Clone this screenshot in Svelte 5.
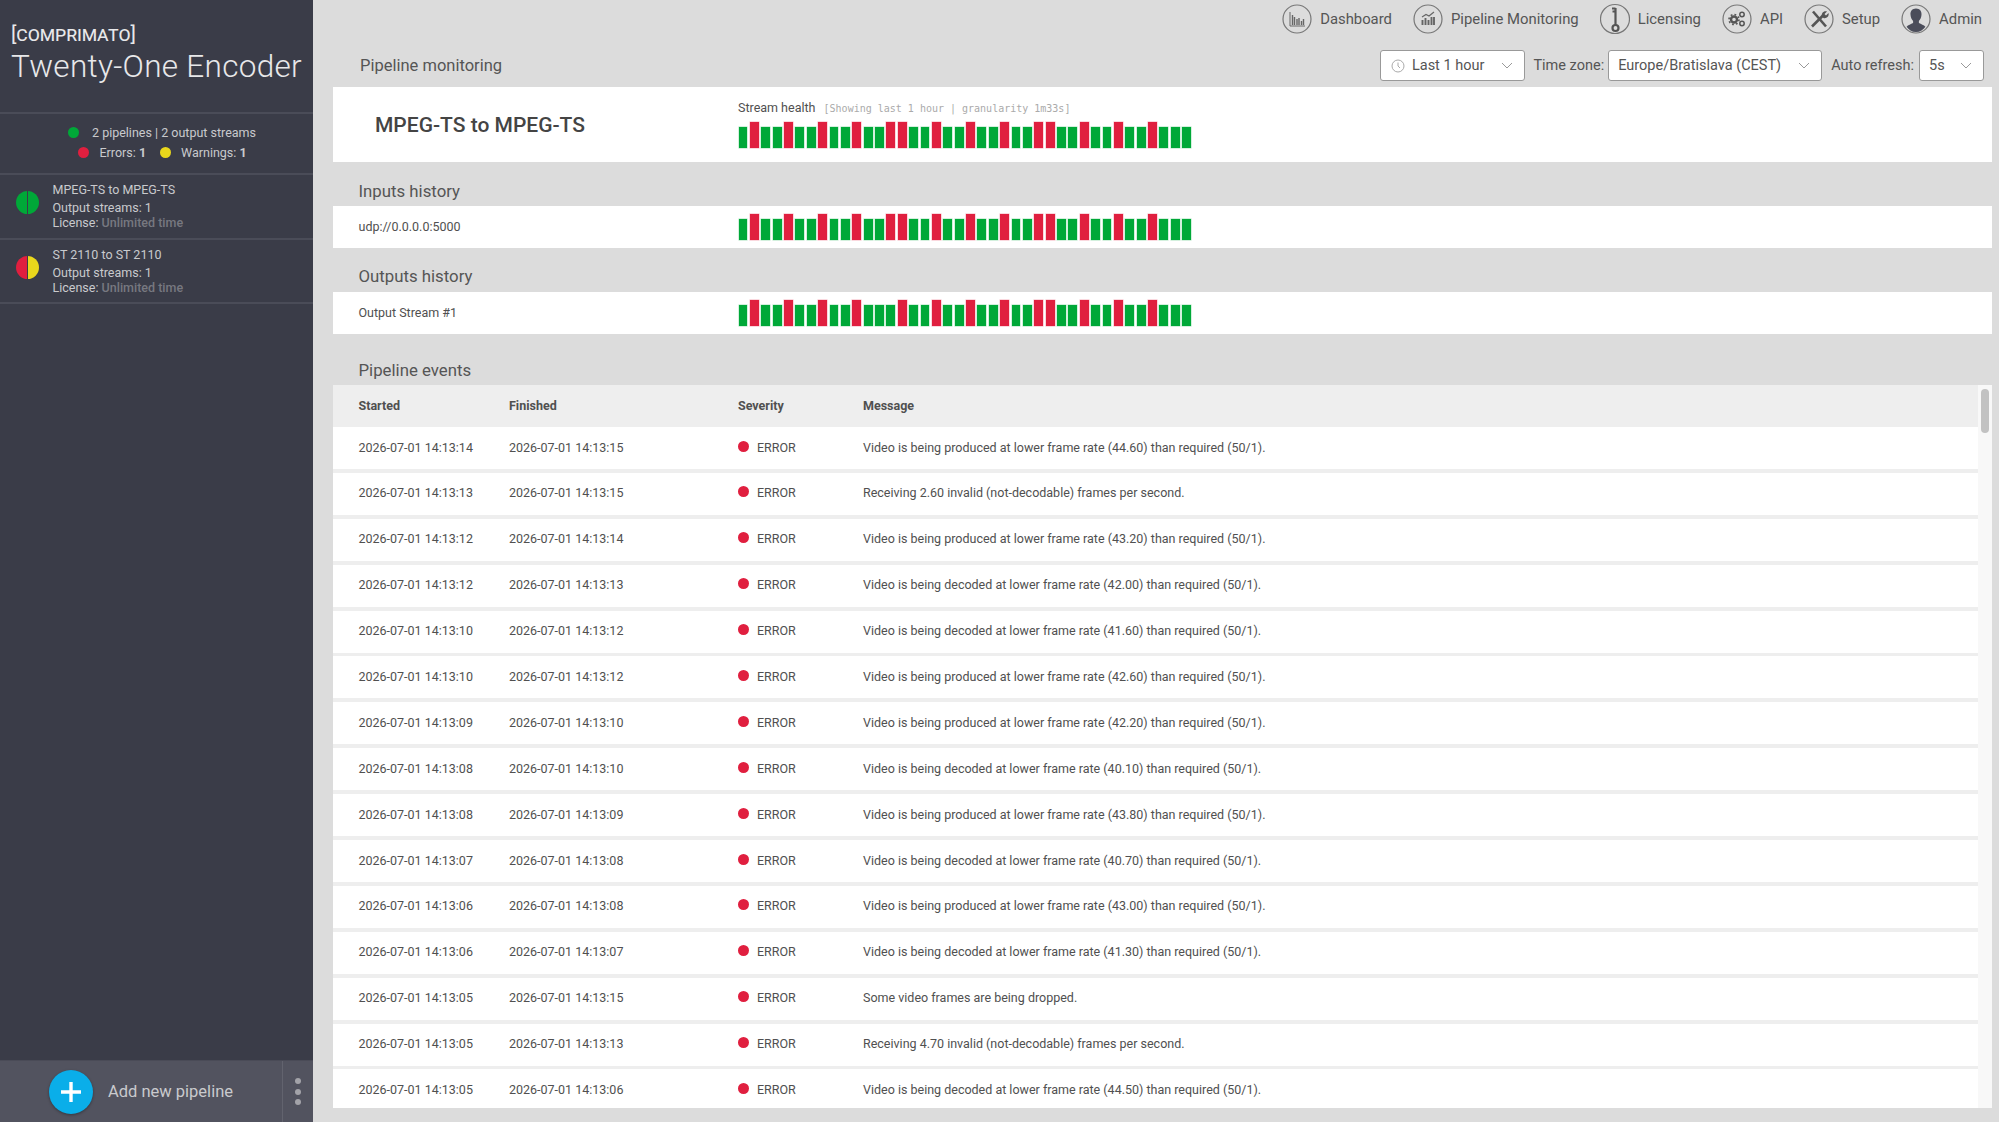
<script>
  const healthReds = [1, 4, 7, 10, 13, 14, 17, 20, 23, 26, 27, 30, 33, 36];
  const outputReds = [1, 4, 7, 10, 14, 17, 20, 23, 26, 27, 30, 33, 36];
  const bars = (reds) => Array.from({ length: 40 }, (_, i) => reds.includes(i));

  const produced = (v) => `Video is being produced at lower frame rate (${v}) than required (50/1).`;
  const decoded = (v) => `Video is being decoded at lower frame rate (${v}) than required (50/1).`;
  const invalid = (v) => `Receiving ${v} invalid (not-decodable) frames per second.`;

  const events = [
    ["14", "15", produced("44.60")],
    ["13", "15", invalid("2.60")],
    ["12", "14", produced("43.20")],
    ["12", "13", decoded("42.00")],
    ["10", "12", decoded("41.60")],
    ["10", "12", produced("42.60")],
    ["09", "10", produced("42.20")],
    ["08", "10", decoded("40.10")],
    ["08", "09", produced("43.80")],
    ["07", "08", decoded("40.70")],
    ["06", "08", produced("43.00")],
    ["06", "07", decoded("41.30")],
    ["05", "15", "Some video frames are being dropped."],
    ["05", "13", invalid("4.70")],
    ["05", "06", decoded("44.50")]
  ];
</script>

<div class="app">
  <aside class="sidebar">
    <div class="brand">
      <div class="logo">[comprimato]</div>
      <div class="product">Twenty-One Encoder</div>
    </div>
    <div class="summary">
      <div class="sum-line first"><i class="dot green"></i><span>2 pipelines | 2 output streams</span></div>
      <div class="sum-line second">
        <i class="dot red"></i><span>Errors: <b>1</b></span>
        <i class="dot yellow"></i><span>Warnings: <b>1</b></span>
      </div>
    </div>
    <div class="pipe">
      <div class="split"><i class="green"></i><i class="green"></i></div>
      <div class="pipe-text">
        <div class="pipe-name">MPEG-TS to MPEG-TS</div>
        <div class="pipe-streams">Output streams: 1</div>
        <div>License: <span class="muted">Unlimited time</span></div>
      </div>
    </div>
    <div class="pipe">
      <div class="split"><i class="red"></i><i class="yellow"></i></div>
      <div class="pipe-text">
        <div class="pipe-name">ST 2110 to ST 2110</div>
        <div class="pipe-streams">Output streams: 1</div>
        <div>License: <span class="muted">Unlimited time</span></div>
      </div>
    </div>
    <div class="footer">
      <div class="add">
        <span class="plus">
          <svg width="24" height="24" viewBox="0 0 24 24"><path d="M12 2v20M2 12h20" stroke="#fff" stroke-width="3.4" /></svg>
        </span>
        <span>Add new pipeline</span>
      </div>
      <div class="more"><i></i><i></i><i></i></div>
    </div>
  </aside>

  <main class="main">
    <nav class="nav">
      <div class="nav-item">
        <svg width="30" height="30" viewBox="0 0 30 30">
          <circle cx="15" cy="15" r="14" class="ring" />
          <path d="M8 8v14h15" class="ln" />
          <path d="M10.5 21v-10M12.5 21v-8M15 21v-6M17 21v-7M19.500 21v-4M21.500 21v-6" class="ln" stroke-width="1.4" />
        </svg>
        <span>Dashboard</span>
      </div>
      <div class="nav-item">
        <svg width="30" height="30" viewBox="0 0 30 30">
          <circle cx="15" cy="15" r="14" class="ring" />
          <path d="M9.500 21v-5M12.500 21v-7M15.500 21v-5M18.500 21v-8M21 21v-8" class="ln" stroke-width="1.900" />
          <path d="M9 13l4-2.500 3 1.500 5-4" class="ln" stroke-width="1.200" />
        </svg>
        <span>Pipeline Monitoring</span>
      </div>
      <div class="nav-item">
        <svg width="30" height="32" viewBox="0 0 30 32">
          <circle cx="15" cy="16" r="14.500" class="ring" />
          <path d="M15.500 5v17M12 5.500h3.500M12.500 8.500h3" class="ln dark" stroke-width="2.200" />
          <circle cx="15.500" cy="25" r="3" fill="none" stroke="#555" stroke-width="2.200" />
        </svg>
        <span>Licensing</span>
      </div>
      <div class="nav-item">
        <svg width="30" height="30" viewBox="0 0 30 30">
          <circle cx="15" cy="15" r="14" class="ring" />
          <circle cx="12" cy="15.500" r="3" fill="none" stroke="#555" stroke-width="2.400" />
          <circle cx="12" cy="15.500" r="5" fill="none" stroke="#555" stroke-width="1.600" stroke-dasharray="1.800 2.100" />
          <circle cx="20" cy="10.500" r="2.200" fill="none" stroke="#555" stroke-width="1.500" />
          <circle cx="20" cy="19.500" r="2.200" fill="none" stroke="#555" stroke-width="1.500" />
        </svg>
        <span>API</span>
      </div>
      <div class="nav-item">
        <svg width="30" height="30" viewBox="0 0 30 30">
          <circle cx="15" cy="15" r="14" class="ring" />
          <path d="M9 7.500l13 15" class="ln dark" stroke-width="2.600" />
          <path d="M8 22.500l11-11" class="ln dark" stroke-width="2.600" />
          <path d="M18 12.500c-1-3 1.500-6 5-5l-2.500 2.500 1.500 1.500 2.500-2.500c1 3.500-2.500 6-5 5z" fill="#555" />
        </svg>
        <span>Setup</span>
      </div>
      <div class="nav-item">
        <svg width="30" height="30" viewBox="0 0 30 30">
          <circle cx="15" cy="15" r="14" class="ring" />
          <path d="M15 4.500c-3.800 0-5.800 2.800-5.500 6.200.2 2.700 1.300 5 2.600 6.200v2c-2.200 1.200-5 2-6.500 3.800 2 3 5.200 5.300 9.400 5.300s7.400-2.300 9.400-5.300c-1.500-1.800-4.300-2.600-6.500-3.800v-2c1.300-1.200 2.400-3.500 2.600-6.200.3-3.400-1.700-6.200-5.500-6.200z" fill="#4b4d5a" />
        </svg>
        <span>Admin</span>
      </div>
    </nav>

    <div class="toolbar">
      <h2>Pipeline monitoring</h2>
      <div class="controls">
        <div class="select range">
          <svg width="14" height="14" viewBox="0 0 14 14" class="clock">
            <circle cx="7" cy="7" r="6" fill="none" stroke="#aaa" />
            <path d="M7 3.500V7l2 2" fill="none" stroke="#aaa" />
          </svg>
          <span>Last 1 hour</span>
          <svg class="chev" width="12" height="7" viewBox="0 0 12 7"><path d="M1 1l5 5 5-5" fill="none" stroke="#999" /></svg>
        </div>
        <label class="zone-label" for="zone">Time zone:</label>
        <div class="select zone" id="zone">
          <span>Europe/Bratislava (CEST)</span>
          <svg class="chev" width="12" height="7" viewBox="0 0 12 7"><path d="M1 1l5 5 5-5" fill="none" stroke="#999" /></svg>
        </div>
        <label class="refresh-label" for="refresh">Auto refresh:</label>
        <div class="select refresh" id="refresh">
          <span>5s</span>
          <svg class="chev" width="12" height="7" viewBox="0 0 12 7"><path d="M1 1l5 5 5-5" fill="none" stroke="#999" /></svg>
        </div>
      </div>
    </div>

    <section class="panel top">
      <div class="pipeline-name">MPEG-TS to MPEG-TS</div>
      <div class="health">
        <div class="health-title">Stream health <span>[Showing last 1 hour | granularity 1m33s]</span></div>
        <div class="bars">
          {#each bars(healthReds) as red}<i class:bad={red}></i>{/each}
        </div>
      </div>
    </section>

    <h3 class="inputs-h">Inputs history</h3>
    <section class="panel history">
      <div>udp://0.0.0.0:5000</div>
      <div class="bars">
        {#each bars(healthReds) as red}<i class:bad={red}></i>{/each}
      </div>
    </section>

    <h3 class="outputs-h">Outputs history</h3>
    <section class="panel history">
      <div>Output Stream #1</div>
      <div class="bars">
        {#each bars(outputReds) as red}<i class:bad={red}></i>{/each}
      </div>
    </section>

    <h3 class="events-h">Pipeline events</h3>
    <div class="table">
      <div class="rows">
        <div class="row head">
          <div>Started</div>
          <div>Finished</div>
          <div>Severity</div>
          <div>Message</div>
        </div>
        {#each events as [start, end, message]}
          <div class="row">
            <div>2026-07-01 14:13:{start}</div>
            <div>2026-07-01 14:13:{end}</div>
            <div class="severity"><i class="dot red"></i>ERROR</div>
            <div>{message}</div>
          </div>
        {/each}
      </div>
      <div class="track"><div class="thumb"></div></div>
    </div>
  </main>
</div>

<style>
  :global(body) {
    margin: 0;
    background: #dcdcdc;
    font-family: Roboto, "Liberation Sans", sans-serif;
    color: #505050;
  }

  .app {
    display: grid;
    grid-template-columns: 313px 1fr;
    height: 1122px;
    overflow: hidden;
  }

  /* sidebar */
  .sidebar {
    display: flex;
    flex-direction: column;
    background: #3a3c48;
    color: #c9cacd;
    font-size: 12.5px;
    height: 1122px;
  }
  .brand {
    box-sizing: border-box;
    height: 114px;
    padding: 22px 0 0 11px;
    border-bottom: 2px solid #4a4c58;
    color: #e8e8ea;
  }
  .logo {
    font-size: 20.500px;
    line-height: 24px;
    font-variant: small-caps;
    letter-spacing: -0.1px;
  }
  .product {
    font-weight: 300;
    font-size: 31.500px;
    line-height: 41px;
    letter-spacing: 0.3px;
    white-space: nowrap;
  }
  .summary {
    box-sizing: border-box;
    height: 61px;
    border-bottom: 2px solid #4a4c58;
    padding-top: 9px;
  }
  .sum-line {
    display: flex;
    align-items: center;
    height: 19.500px;
  }
  .sum-line.first {
    padding-left: 68px;
    gap: 13px;
  }
  .sum-line.second {
    padding-left: 78px;
    gap: 10.500px;
  }
  .sum-line.second i.yellow {
    margin-left: 3px;
  }
  .dot {
    display: inline-block;
    width: 11px;
    height: 11px;
    border-radius: 50%;
    flex: none;
  }
  i.green { background: #00a838; }
  i.red { background: #e01f3f; }
  i.yellow { background: #e9d71c; }
  .pipe {
    box-sizing: border-box;
    display: flex;
    align-items: flex-start;
    height: 65px;
    border-bottom: 2px solid #4a4c58;
    padding: 7px 0 0 16px;
  }
  .pipe + .pipe {
    height: 64px;
  }
  .split {
    display: flex;
    gap: 1px;
    width: 23px;
    height: 23px;
    margin: 8.500px 13.500px 0 0;
    border-radius: 50%;
    overflow: hidden;
    background: #3a3c48;
    flex: none;
  }
  .split i {
    flex: 1;
  }
  .pipe-text {
    line-height: 15px;
  }
  .pipe-streams {
    margin-top: 3px;
  }
  .muted {
    color: #777880;
    font-weight: 500;
  }
  .footer {
    margin-top: auto;
    height: 61px;
    background: #52535f;
    border-top: 1px solid #4a4b57;
    display: flex;
  }
  .add {
    flex: 1;
    display: flex;
    align-items: center;
    gap: 15px;
    padding-left: 49px;
    font-size: 16.5px;
    border-right: 1px solid #62636e;
  }
  .plus {
    width: 44px;
    height: 44px;
    border-radius: 50%;
    background: #0aaee9;
    display: flex;
    align-items: center;
    justify-content: center;
    box-shadow: 0 1px 3px rgba(0, 0, 0, 0.35);
  }
  .more {
    width: 30px;
    display: flex;
    flex-direction: column;
    align-items: center;
    justify-content: center;
    gap: 4.500px;
  }
  .more i {
    width: 6px;
    height: 6px;
    border-radius: 50%;
    background: #a3a3a9;
  }

  /* main column */
  .main {
    min-width: 0;
    padding: 0 7px 0 20px;
    display: flex;
    flex-direction: column;
  }
  .nav {
    height: 38px;
    display: flex;
    align-items: center;
    justify-content: flex-end;
    gap: 21px;
    padding-right: 10px;
    font-size: 14.850px;
    color: #555;
    white-space: nowrap;
  }
  .nav-item {
    display: flex;
    align-items: center;
    gap: 8px;
    height: 38px;
  }
  .ring {
    fill: none;
    stroke: #777;
    stroke-width: 1.2;
  }
  .ln {
    fill: none;
    stroke: #666;
  }
  .ln.dark {
    stroke: #555;
  }
  .toolbar {
    height: 49px;
    display: flex;
    align-items: flex-start;
    justify-content: space-between;
    padding-top: 12px;
    box-sizing: border-box;
  }
  h2, h3 {
    margin: 0;
    font-weight: 400;
    font-size: 16.5px;
    color: #555;
  }
  h2 {
    margin-left: 27px;
    line-height: 31px;
  }
  .controls {
    display: flex;
    align-items: center;
    font-size: 14.5px;
    color: #555;
  }
  .select {
    box-sizing: border-box;
    height: 31px;
    background: #fff;
    border: 1px solid #999;
    border-radius: 3px;
    display: flex;
    align-items: center;
    white-space: nowrap;
  }
  .range { width: 145px; padding-left: 10px; }
  .zone { width: 214px; padding-left: 9px; }
  .refresh { width: 65px; padding-left: 9px; margin-right: 8px; }
  .clock { margin-right: 7px; }
  .chev { margin-left: auto; margin-right: 11px; }
  .zone-label { margin: 0 4px 0 8.500px; }
  .refresh-label { margin: 0 5px 0 9px; }

  .panel {
    background: #fff;
    display: grid;
    grid-template-columns: 405px 1fr;
    align-items: center;
  }
  .top {
    height: 75px;
  }
  .pipeline-name {
    padding-left: 42px;
    font-size: 21px;
    font-weight: 500;
    color: #444;
  }
  .health {
    align-self: start;
    padding-top: 12px;
  }
  .health-title {
    font-size: 12.5px;
    line-height: 18px;
    margin-bottom: 4px;
  }
  .health-title span {
    font-family: "DejaVu Sans Mono", monospace;
    font-size: 10px;
    color: #aaa;
    margin-left: 5px;
  }
  .bars {
    display: flex;
    align-items: flex-end;
    gap: 2.580px;
    height: 26px;
    padding-left: 0.600px;
  }
  .bars i {
    width: 8.800px;
    height: 21px;
    background: #00a838;
    box-shadow: 0 0 0 0.5px rgba(0, 168, 56, 0.35);
  }
  .bars i.bad {
    height: 26px;
    background: #e01f3f;
    box-shadow: 0 0 0 0.5px rgba(224, 31, 63, 0.35);
  }
  h3 {
    padding-left: 25.500px;
    display: flex;
    align-items: flex-end;
    font-size: 16.800px;
  }
  .inputs-h {
    height: 44px;
    padding-bottom: 5.500px;
    box-sizing: border-box;
  }
  .outputs-h {
    height: 44px;
    padding-bottom: 6.500px;
    box-sizing: border-box;
  }
  .events-h {
    height: 51px;
    padding-bottom: 5.500px;
    box-sizing: border-box;
  }
  .history {
    height: 42px;
    padding-left: 25.500px;
    padding-bottom: 1px;
    box-sizing: border-box;
    grid-template-columns: 379.500px 1fr;
    font-size: 12.5px;
  }

  /* events table */
  .table {
    height: 723px;
    display: flex;
    overflow: hidden;
    background: #eee;
  }
  .rows {
    flex: 1;
    min-width: 0;
    display: flex;
    flex-direction: column;
    gap: 3.900px;
  }
  .row {
    flex: none;
    box-sizing: border-box;
    height: 42px;
    display: grid;
    grid-template-columns: 150.500px 229px 125px 1fr;
    align-items: center;
    padding: 0 0 2px 25.500px;
    background: #fff;
    font-size: 12.5px;
    white-space: nowrap;
  }
  .row.head {
    background: #eee;
    font-weight: 700;
    margin-bottom: -3.900px;
  }
  .severity {
    display: flex;
    align-items: center;
    gap: 8px;
  }
  .severity .dot {
    margin-top: -2px;
  }
  .track {
    width: 14px;
    background: #f8f8f8;
    flex: none;
    padding: 4px 3px 0;
    box-sizing: border-box;
  }
  .thumb {
    height: 44px;
    background: #c2c2c2;
    border-radius: 4px;
  }
</style>
